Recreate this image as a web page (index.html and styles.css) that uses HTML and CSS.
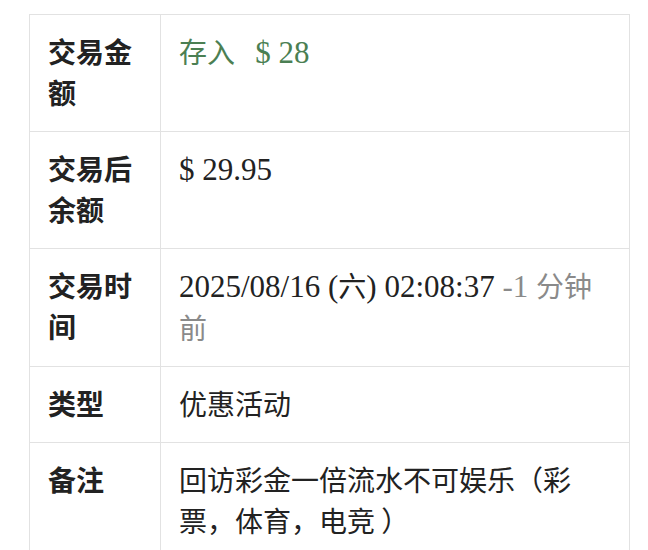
FILE: index.html
```html
<!DOCTYPE html>
<html lang="zh-CN">
<head>
    <meta charset="UTF-8">
    <meta name="viewport" content="width=device-width, initial-scale=1.0">
    <title>交易详情</title>
    <link rel="stylesheet" href="styles.css">
</head>
<body>

    <!-- Transaction Detail Table -->
    <table class="detail-table">
        <tr>
            <th>交易金额</th>
            <td class="amount-in"><span class="amount-type">存入</span> <span class="en">$ 28</span></td>
        </tr>
        <tr>
            <th>交易后余额</th>
            <td><span class="en">$ 29.95</span></td>
        </tr>
        <tr>
            <th>交易时间</th>
            <td><span class="en">2025/08/16 (</span>六<span class="en">) 02:08:37 </span><span class="time-ago"><span class="en">-1 </span>分钟前</span></td>
        </tr>
        <tr>
            <th>类型</th>
            <td>优惠活动</td>
        </tr>
        <tr>
            <th>备注</th>
            <td>回访彩金一倍流水不可娱乐（彩票，体育，电竞 ）</td>
        </tr>
    </table>

</body>
</html>
```

FILE: styles.css
```css
* {
    margin: 0;
    padding: 0;
    box-sizing: border-box;
}

:root {
    --border-color: #e2e2e2;
    --text-primary: #222222;
    --text-muted: #8a8a8a;
    --deposit-color: #4b7f53;
}

body {
    background-color: #ffffff;
    font-family: "Noto Sans CJK SC", "Noto Sans", sans-serif;
    color: var(--text-primary);
    padding-top: 14px;
}

/* Detail Table */
.detail-table {
    margin-left: 29px;
    width: 601px;
    border-collapse: collapse;
    font-size: 28px;
    line-height: 41px;
}

.detail-table th,
.detail-table td {
    border: 1.5px solid var(--border-color);
    padding: 16px 18px 18px 18px;
    text-align: left;
    vertical-align: top;
}

.detail-table th {
    width: 131px;
    font-weight: bold;
}

.detail-table td {
    font-weight: normal;
}

/* Latin text in a serif face */
.en {
    font-family: "Liberation Serif", serif;
    font-size: 31px;
}

.amount-in {
    color: var(--deposit-color);
}

.amount-type {
    margin-right: 14px;
}

.time-ago {
    color: var(--text-muted);
}
```
